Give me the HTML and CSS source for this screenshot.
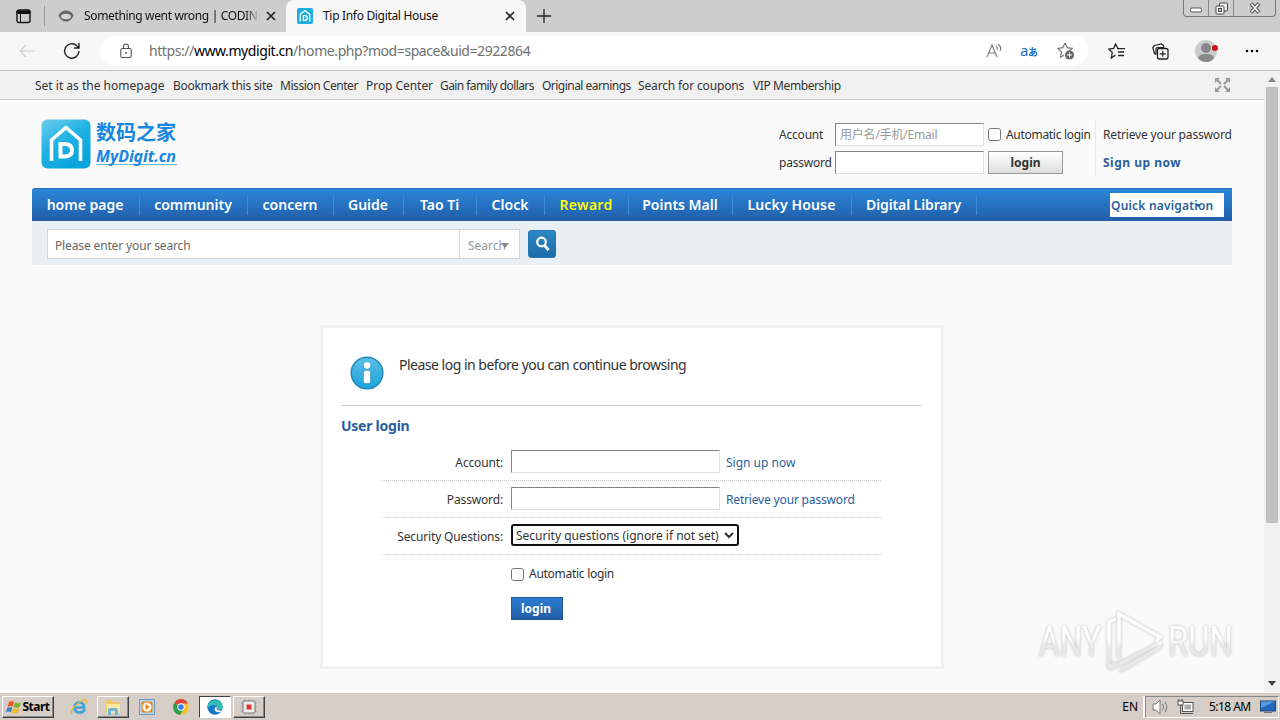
FILE: index.html
```
<!DOCTYPE html>
<html lang="en">
<head>
  <meta charset="UTF-8">
  <title>Tip Info Digital House</title>
  <link rel="stylesheet" href="styles.css">
</head>
<body>
  <div class="tabs">
    <div class="tab-menu">
      <svg width="16" height="15" viewBox="0 0 16 15"><rect x="1" y="1" width="13" height="12.500" rx="2" fill="none" stroke="#111" stroke-width="1.400"/><path d="M1 2h13v2.500H1zM4.500 2v11" fill="#111" stroke="#111"/></svg>
    </div>
    <div class="tab">
      <svg width="16" height="16" viewBox="0 0 16 16"><path d="M.5 7.500Q3 2.500 8 2.500T15.500 7.500Q13 13.500 8 13.500T.5 7.500Z" fill="#666"/><ellipse cx="8" cy="8.500" rx="5" ry="2.700" fill="#d4d4d4"/></svg>
      <span class="tab-title t1">Something went wrong | CODING</span>
      <svg class="x" width="10" height="10" viewBox="0 0 10 10"><path d="M1 1l8 8M9 1l-8 8"/></svg>
    </div>
    <div class="tab active">
      <svg width="16" height="16" viewBox="0 0 50 50"><rect width="50" height="50" rx="6" fill="#1badde"/><path d="M10 42V20L25 8l15 12v22M20 24v15h5q7-1 7-8t-7-7z" fill="none" stroke="#fff" stroke-width="4"/></svg>
      <span class="tab-title t2">Tip Info Digital House</span>
      <svg class="x" width="10" height="10" viewBox="0 0 10 10"><path d="M1 1l8 8M9 1l-8 8"/></svg>
    </div>
    <svg class="plus" width="14" height="14" viewBox="0 0 14 14"><path d="M7 0v14M0 7h14" stroke="#222" stroke-width="1.300"/></svg>
    <div class="win-btns">
      <span class="wb low"><svg width="12" height="6"><rect x=".5" y="1" width="11" height="4" rx="1.500" fill="#fff" stroke="#555"/></svg></span>
      <span class="wb"><svg width="13" height="13"><rect x="4.500" y="1" width="8" height="8" rx="1" fill="#eee" stroke="#444"/><rect x="1" y="4" width="8" height="8" rx="1" fill="#fff" stroke="#444"/><rect x="3.500" y="6.500" width="3" height="3" fill="#ccc" stroke="#444"/></svg></span>
      <span class="wb close"><svg width="12" height="12"><path d="M2 1.500l8 9M10 1.500l-8 9" stroke="#555" stroke-width="4"/><path d="M2.500 2l7 8M9.500 2l-7 8" stroke="#fff" stroke-width="1.800"/></svg></span>
    </div>
  </div>

  <div class="toolbar">
    <svg class="back" width="16" height="14" viewBox="0 0 16 14"><path d="M16 7H1M7 1L1 7l6 6" fill="none" stroke="#ccc" stroke-width="1.200"/></svg>
    <svg class="reload" width="18" height="18" viewBox="0 0 18 18"><path d="M16 9a7.200 7.200 0 1 1-2.500-5.500L16 6M16 1v5h-5" fill="none" stroke="#222" stroke-width="1.400"/></svg>
    <div class="address">
      <svg class="lock" width="12" height="16" viewBox="0 0 12 16"><rect x=".8" y="5.500" width="10.400" height="9" rx="1.500" fill="none" stroke="#555" stroke-width="1.100"/><path d="M3.500 5.500V3.500a2.500 2.500 0 0 1 5 0v2" fill="none" stroke="#555" stroke-width="1.100"/><circle cx="6" cy="10" r="1" fill="#555"/></svg>
      <span class="url">https://<b>www.mydigit.cn</b>/home.php?mod=space&amp;uid=2922864</span>
      <svg class="read" width="16" height="16" viewBox="0 0 16 16"><path d="M1 14L6 2l5 12M2.700 10h6.600M10 3q2 1.500 1 4M12 1q4 3 2 7" fill="none" stroke="#777" stroke-width="1.100"/></svg>
      <span class="translate">a<small>あ</small></span>
      <svg class="addfav" width="18" height="18" viewBox="0 0 18 18"><path d="M8 1l2.200 4.700 5 .7-3.600 3.400M8 1L5.800 5.700l-5 .7 3.700 3.500-1 5.300L7 13.200" fill="none" stroke="#777" stroke-width="1.200"/><circle cx="12.500" cy="13" r="4.500" fill="#666"/><path d="M12.500 10.500v5M10 13h5" stroke="#fff"/></svg>
    </div>
    <svg class="fav" width="17" height="16" viewBox="0 0 17 16"><path d="M10 5.500L7.500 1 5.600 5.500l-5 .5L4.300 9.500 3.300 15 7.500 12M9 5.700h8M10 9h6M10 12.500h6" fill="none" stroke="#222" stroke-width="1.300"/></svg>
    <svg class="coll" width="17" height="17" viewBox="0 0 17 17"><path d="M4 11.500L2.500 10.500.8 4.500 2.500 2.500 9.500 1l2 1.500.5 2M4 11.500V6.500q0-2 2-2h6" fill="none" stroke="#222" stroke-width="1.200"/><rect x="5.500" y="5.500" width="10.500" height="10.500" rx="2" fill="#f7f7f7" stroke="#222" stroke-width="1.300"/><path d="M10.750 7.800v6M7.750 10.800h6" stroke="#222" stroke-width="1.200"/></svg>
    <svg class="avatar" width="24" height="22" viewBox="0 0 24 22"><circle cx="11" cy="11" r="11" fill="#ccc"/><circle cx="11" cy="8" r="5" fill="#888"/><path d="M3 18q1-4 8-4t8 4q-3 4-8 4t-8-4" fill="#888"/><circle cx="20" cy="8" r="3" fill="#d8101c"/></svg>
    <svg class="dots" width="14" height="4"><circle cx="2" cy="2" r="1.300"/><circle cx="7" cy="2" r="1.300"/><circle cx="12" cy="2" r="1.300"/></svg>
  </div>

  <div class="view">
    <div class="page">
      <div class="topbar">
        <a>Set it as the homepage</a><a>Bookmark this site</a><a>Mission Center</a><a>Prop Center</a><a>Gain family dollars</a><a>Original earnings</a><a>Search for coupons</a><a>VIP Membership</a>
        <svg class="expand" width="15" height="14" viewBox="0 0 15 14"><path d="M2 2l4 4M13 2L9 6M2 12l4-4M13 12L9 8" stroke="#999" stroke-width="2"/><path d="M0 0h5L0 5zM15 0h-5l5 5zM0 14h5L0 9zM15 14h-5l5-5z" fill="#999"/></svg>
      </div>

      <div class="wrap">
        <div class="header">
          <svg class="mark" width="50" height="50" viewBox="0 0 50 50">
            <defs><linearGradient id="lg" x1="0" y1="0" x2="0.600" y2="1"><stop offset="0" stop-color="#6ccdee"/><stop offset=".5" stop-color="#22b2e4"/><stop offset="1" stop-color="#08a4dc"/></linearGradient></defs>
            <rect x=".5" y=".5" width="49" height="49" rx="6" fill="url(#lg)"/>
            <path d="M10.500 42V21L25 8.500 39.500 21v21" fill="none" stroke="#fff" stroke-width="3.600" stroke-linejoin="round"/>
            <path d="M19.500 25v12.500h4.500q7-.5 7-6.300T24 25z" fill="none" stroke="#fff" stroke-width="4"/>
          </svg>
          <div class="brand"><div class="cn">数码之家</div><div class="en">MyDigit.cn</div></div>
          <div class="quick-login">
            <label>Account</label>
            <input class="in" type="text" placeholder="用户名/手机/Email">
            <div class="auto"><input type="checkbox"><span>Automatic login</span></div>
            <a class="side">Retrieve your password</a>
            <label>password</label>
            <input class="in" type="text">
            <div><button class="gray">login</button></div>
            <a class="side reg">Sign up now</a>
          </div>
        </div>

        <div class="nav">
          <a>home page</a><a>community</a><a>concern</a><a>Guide</a><a>Tao Ti</a><a>Clock</a><a class="hot">Reward</a><a>Points Mall</a><a>Lucky House</a><a>Digital Library</a>
          <div class="quick"><span>Quick navigation</span><i></i></div>
        </div>

        <div class="search">
          <div class="search-box"><span class="ph">Please enter your search</span><span class="type">Search<i></i></span></div>
          <button class="go"><svg width="16" height="16" viewBox="0 0 16 16"><circle cx="6.500" cy="6" r="4.300" fill="none" stroke="#fff" stroke-width="2.200"/><path d="M9.500 9.500l4 4.500" stroke="#fff" stroke-width="2.800"/></svg></button>
        </div>

        <div class="card">
          <div class="notice">
            <svg width="34" height="34" viewBox="0 0 34 34"><defs><linearGradient id="ig" x1="0" y1="0" x2="0" y2="1"><stop offset="0" stop-color="#5fbde4"/><stop offset="1" stop-color="#18a4dc"/></linearGradient></defs><circle cx="17" cy="17" r="15.800" fill="url(#ig)" stroke="#2488b8" stroke-width="1.500"/><circle cx="17" cy="9.500" r="3.200" fill="#fff"/><rect x="13.500" y="14.500" width="7" height="13" rx="2" fill="#fff" stroke="#2488b8" stroke-width=".5"/></svg>
            <p>Please log in before you can continue browsing</p>
          </div>
          <h3>User login</h3>
          <div class="form">
            <div class="row"><label>Account:</label><input class="in" type="text"><a>Sign up now</a></div>
            <div class="row"><label>Password:</label><input class="in" type="text"><a class="forgot">Retrieve your password</a></div>
            <div class="row"><label>Security Questions:</label><div class="select"><span>Security questions (ignore if not set)</span><svg width="10" height="7" viewBox="0 0 10 7"><path d="M1 1l4 4 4-4" fill="none" stroke="#333" stroke-width="2"/></svg></div></div>
            <div class="row last"><label></label><input type="checkbox"><span>Automatic login</span></div>
            <button class="blue">login</button>
          </div>
        </div>
      </div>
    </div>
    <div class="scroll"><i class="up"></i><div class="thumb"></div><i class="down"></i></div>

    <svg class="watermark" width="204" height="66" viewBox="0 0 204 66">
      <defs><linearGradient id="wg" x1="0" y1="0" x2="0" y2="1"><stop offset=".45" stop-color="#fff"/><stop offset=".6" stop-color="#e8e8e8"/></linearGradient></defs>
      <g class="wm-text">
        <text x="3" y="47" textLength="62" lengthAdjust="spacingAndGlyphs">ANY</text>
        <text x="132" y="47" textLength="65" lengthAdjust="spacingAndGlyphs">RUN</text>
      </g>
      <path d="M80 10L73 13V57L80 54M83 50V5L124 28L120 33M84 62L124 38V34L73 60" fill="none" stroke="url(#wg)" stroke-width="3.500"/>
    </svg>
  </div>

  <div class="taskbar">
    <div class="tb raised start">
      <svg width="16" height="16" viewBox="0 0 16 16"><path d="M3 3q3-2 5 0L6.500 8q-2-2-5 0z" fill="#e8562a"/><path d="M9 3.500q3 1.500 6 0L13.500 8q-3 1.500-6 0z" fill="#79b52c"/><path d="M1.200 9q3-2 5 0L5 13.500q-2-2-5 0z" fill="#3c82cc"/><path d="M7 9.300q3 1.500 6 0l-1.200 4.500q-3 1.500-6 0z" fill="#f5b91e"/></svg>
      <b>Start</b>
    </div>
    <div class="tb ie"><svg width="18" height="18" viewBox="0 0 18 18"><path d="M15 11.500Q12.500 15 9 14.500 4.500 14 4.500 9.500T9 4.500q5 0 5 5H5" fill="none" stroke="#3ba3dd" stroke-width="2.700"/><path d="M2 16Q-1 13 7 6.500T16 2q2 1-1 4" fill="none" stroke="#e9b735" stroke-width="1.300"/></svg></div>
    <div class="tb raised"><svg width="18" height="18" viewBox="0 0 18 18"><path d="M2 4V2h6l1 2h7v11H2z" fill="#edca66"/><path d="M3 6h13v9H3z" fill="#f9e9a5"/><path d="M4 17v-5q0-2 2-2h6q2 0 2 2v5h-3v-4H7v4z" fill="#6ab7dc"/></svg></div>
    <div class="tb"><svg width="16" height="16" viewBox="0 0 16 16"><rect x=".5" y=".5" width="15" height="15" fill="#b8d5ec" stroke="#6b9ac4"/><rect x="2.500" y="2.500" width="11" height="11" rx="2" fill="#ee8417"/><circle cx="8" cy="8" r="4.500" fill="#fff"/><path d="M6.500 5v6l4.500-3z" fill="#ee8417"/></svg></div>
    <div class="tb"><svg width="16" height="16" viewBox="0 0 16 16"><circle cx="8" cy="8" r="7.800" fill="#f6c52d"/><path d="M8 8L1.200 4A7.800 7.800 0 0 1 15 4.500H8z" fill="#dc4437"/><path d="M8 8L1.200 4A7.800 7.800 0 0 0 7 15.800L11 10z" fill="#2d9e50"/><circle cx="8" cy="8" r="3.700" fill="#fff"/><circle cx="8" cy="8" r="2.800" fill="#3d7ee8"/></svg></div>
    <div class="tb pressed"><svg width="16" height="16" viewBox="0 0 16 16"><circle cx="8" cy="8" r="7.700" fill="#1677c5"/><path d="M.5 7A7.700 7.700 0 0 1 15.700 8q0 3-4 3-3 0-2-2 0-3-3-3Q2 6 .5 10z" fill="#35bdb5"/><path d="M9 8q1.500 0 .6 1.500 0 2.500 5 2L13.500 13q-5 1-6-2.500-.3-2 1.500-2.500" fill="#fff"/></svg></div>
    <div class="tb raised"><svg width="16" height="16" viewBox="0 0 16 16"><path d="M4 0v16M8 0v16M12 0v16M0 4h16M0 8h16M0 12h16" stroke="#aaa"/><rect x="2" y="2" width="12" height="12" rx="1" fill="#eee" stroke="#777"/><rect x="5.500" y="5.500" width="5" height="5" fill="#dc3838"/></svg></div>
    <span class="lang">EN</span>
    <div class="tray">
      <svg class="spk" width="17" height="16" viewBox="0 0 17 16"><path d="M1 5h3l4-4v14l-4-4H1z" fill="#fff" stroke="#777"/><path d="M10.500 5q2 3 0 6M13 3q3.500 5 0 10" fill="none" stroke="#888" stroke-width="1.200"/></svg>
      <svg class="net" width="17" height="16" viewBox="0 0 17 16"><rect x="5.500" y="3.500" width="10.500" height="9" fill="#fff" stroke="#555"/><rect x="7.500" y="5.500" width="6.500" height="5" fill="#aaa"/><path d="M7 14.500h9M2 0v2M5 0v2M3.500 6v8.500H7" fill="none" stroke="#555"/><rect x="1" y="2" width="5" height="4" fill="#fff" stroke="#555"/></svg>
      <span class="time">5:18 AM</span>
      <svg class="desk" width="16" height="14" viewBox="0 0 16 14"><rect x=".5" y="1" width="15" height="10" fill="#2467bd" stroke="#29497c"/><path d="M1 1.500h14L1 8z" fill="#559ae2"/><path d="M4 12.500h8" stroke="#777"/></svg>
    </div>
  </div>
</body>
</html>
```
FILE: styles.css
```
* {
  box-sizing: border-box;
}

body {
  margin: 0;
  width: 1280px;
  height: 720px;
  overflow: hidden;
  display: flex;
  flex-direction: column;
  font: 12px/18px "Noto Sans", "Noto Sans CJK SC", sans-serif;
  color: #333;
  background: #fafafa;
}

svg {
  display: block;
  flex: none;
}

/* browser chrome */
.tabs {
  height: 32px;
  flex: none;
  display: flex;
  align-items: center;
  background: #cdcdcd;
  color: #111;
}
.tab-menu {
  width: 45px;
  height: 20px;
  border-right: 1px solid #999;
  padding: 3px 0 0 16px;
}
.tab {
  width: 241px;
  height: 32px;
  display: flex;
  align-items: center;
  padding-left: 13px;
}
.tab.active {
  background: #f7f7f7;
  border-radius: 8px 8px 0 0;
  width: 240px;
  padding-left: 11px;
}
.tab-title {
  margin-left: 10px;
  overflow: hidden;
  white-space: nowrap;
}
.t1 {
  width: 176px;
  letter-spacing: -0.35px;
  -webkit-mask-image: linear-gradient(90deg, #000 92%, transparent);
}
.t2 {
  width: 171px;
  letter-spacing: -0.32px;
}
.x {
  margin-left: 6px;
  stroke: #222;
  stroke-width: 1.6;
}
.t2 + .x {
  margin-left: 11px;
}
.plus {
  margin-left: 11px;
}
.win-btns {
  margin-left: auto;
  margin-right: 4px;
  align-self: flex-start;
  display: flex;
  height: 17px;
  border: 1px solid #777;
  border-top: 0;
  border-radius: 0 0 4px 4px;
}
.wb {
  width: 25px;
  display: flex;
  justify-content: center;
  align-items: center;
  border-right: 1px solid #888;
}
.wb.low {
  padding-top: 4px;
}
.wb.close {
  width: 41px;
  border: 0;
}

.toolbar {
  height: 39px;
  flex: none;
  display: flex;
  align-items: center;
  background: #f7f7f7;
  border-bottom: 1px solid #c3c3c3;
}
.back {
  margin-left: 19px;
}
.reload {
  margin-left: 28px;
}
.address {
  width: 988px;
  height: 30px;
  margin-left: 19px;
  border-radius: 15px;
  background: #fff;
  display: flex;
  align-items: center;
}
.lock {
  margin-left: 20px;
}
.url {
  margin-left: 17px;
  width: 837px;
  font-size: 14px;
  letter-spacing: -0.42px;
  color: #707070;
}
.url b {
  font-weight: 400;
  color: #000;
}
.translate {
  margin-left: 18px;
  width: 18px;
  font-size: 15px;
  letter-spacing: -0.5px;
  white-space: nowrap;
  color: #1a70c4;
}
.translate small {
  font-size: 10px;
  font-weight: bold;
}
.addfav {
  margin-left: 19px;
}
.fav {
  margin-left: 20px;
}
.coll {
  margin-left: 27px;
}
.avatar {
  margin-left: 26px;
}
.dots {
  margin-left: 26px;
}

/* page area */
.view {
  position: relative;
  flex: 1;
  min-height: 0;
  display: flex;
}
.page {
  width: 1264px;
}
.topbar {
  height: 29px;
  display: flex;
  align-items: center;
  padding: 1px 0 0 35px;
  background: #f0f0f0;
  border-bottom: 1px solid #cdcdcd;
  white-space: nowrap;
}
.topbar a { width: 107px; letter-spacing: -0.3px; }
.topbar a:nth-child(1) { width: 138px; letter-spacing: 0; }
.topbar a:nth-child(3) { width: 86px; letter-spacing: -0.45px; }
.topbar a:nth-child(4) { width: 74px; letter-spacing: -0.05px; }
.topbar a:nth-child(5) { width: 102px; letter-spacing: -0.58px; }
.topbar a:nth-child(6) { width: 96px; letter-spacing: -0.53px; }
.topbar a:nth-child(7) { width: 115px; letter-spacing: -0.15px; }
.topbar a:nth-child(8) { letter-spacing: -0.4px; }
.expand {
  margin-left: auto;
  margin-right: 34px;
  margin-bottom: 2px;
}

.wrap {
  width: 1200px;
  margin-left: 32px;
}
.header {
  height: 88px;
  display: flex;
  padding: 19px 0 0 9px;
}
.brand {
  margin-left: 5px;
  width: 81px;
  color: #1787e0;
}
.cn {
  font: bold 20px/26px "Noto Sans CJK SC", sans-serif;
}
.en {
  height: 20px;
  font: italic bold 16px/22px "Noto Sans", sans-serif;
  letter-spacing: -0.1px;
  border-bottom: 1px solid #6eb5ee;
}
.quick-login {
  margin-left: auto;
  margin-top: 1px;
  display: grid;
  grid-template-columns: 56px 153px 108px 136px;
  grid-template-rows: 28px 28px;
  align-items: center;
  height: 56px;
  white-space: nowrap;
}
.quick-login label,
.auto span {
  padding-top: 2px;
  letter-spacing: -0.3px;
}
.quick-login label {
  letter-spacing: -0.2px;
}
.in {
  display: block;
  width: 149px;
  height: 23px;
  margin: 0;
  padding: 0 4px;
  border: 1px solid;
  border-color: #848484 #e0e0e0 #e0e0e0 #848484;
  background: #fff;
  font: 12px "Noto Sans", "Noto Sans CJK SC", sans-serif;
  letter-spacing: -0.2px;
}
.in::placeholder {
  color: #999;
}
.auto {
  display: flex;
  align-items: center;
}
input[type="checkbox"] {
  margin: 1px 5px 0 0;
  width: 13px;
  height: 13px;
}
.side {
  height: 28px;
  padding-left: 7px;
  line-height: 30px;
  letter-spacing: -0.17px;
  border-left: 1px solid #e8e8e8;
  margin-left: -1px;
}
.reg {
  font-weight: bold;
  letter-spacing: 0.5px;
  color: #2a5f9c;
}
.gray {
  display: block;
  width: 75px;
  height: 23px;
  padding: 0;
  border: 1px solid #999;
  background: linear-gradient(#fff, #ddd);
  font: bold 12px "Noto Sans", sans-serif;
  color: #333;
}

.nav {
  height: 33px;
  display: flex;
  align-items: center;
  background: linear-gradient(#2c86d8, #205fac);
  border-top: 1px solid #236db8;
  border-bottom: 1px solid #265d9c;
  border-radius: 3px 0 0 0;
  color: #fff;
  font-size: 14px;
  font-weight: 600;
}
.nav a {
  height: 20px;
  padding-right: 1px;
  line-height: 20px;
  text-align: center;
  white-space: nowrap;
  border-right: 1px solid #3f8bd6;
}
.nav a:nth-child(1) { width: 108px; }
.nav a:nth-child(2) { width: 108px; }
.nav a:nth-child(3) { width: 86px; }
.nav a:nth-child(4) { width: 70px; }
.nav a:nth-child(5) { width: 73px; }
.nav a:nth-child(6) { width: 68px; }
.nav a:nth-child(7) { width: 84px; }
.nav a:nth-child(8) { width: 104px; }
.nav a:nth-child(9) { width: 119px; letter-spacing: 0.15px; }
.nav a:nth-child(10) { width: 125px; letter-spacing: -0.1px; }
.nav .hot {
  color: #ff0;
  letter-spacing: 0.3px;
}
.quick {
  position: relative;
  width: 114px;
  height: 24px;
  margin-left: auto;
  margin-right: 8px;
  padding-left: 1px;
  background: #fff;
  color: #2a5f9c;
  font-size: 12px;
  letter-spacing: 0.2px;
  line-height: 25px;
  white-space: nowrap;
}
.quick i {
  position: absolute;
  left: 85px;
  top: 11px;
  border: 3px solid transparent;
  border-top-color: #2a5f9c;
}

.search {
  height: 44px;
  display: flex;
  padding: 8px 0 0 15px;
  background: #e8eff5;
}
.search-box {
  width: 473px;
  height: 30px;
  display: flex;
  border: 1px solid #ccd9e3;
  background: #fff;
  line-height: 31px;
  color: #666;
}
.ph {
  width: 411px;
  padding-left: 7px;
  letter-spacing: -0.14px;
}
.type {
  position: relative;
  flex: 1;
  padding-left: 8px;
  border-left: 1px solid #ccd9e3;
  color: #999;
}
.type i {
  position: absolute;
  left: 41px;
  top: 13px;
  border: 4px solid transparent;
  border-top: 5px solid #888;
  border-bottom: 0;
}
.go {
  width: 28px;
  height: 28px;
  margin: 1px 0 0 8px;
  padding: 0 0 0 6px;
  border: 1px solid #2476ae;
  border-radius: 3px;
  background: linear-gradient(#2b88c4, #1d6ba9);
}

/* login card */
.card {
  width: 624px;
  height: 344px;
  margin: 60px 0 0 288px;
  padding: 28px 19px 0 18px;
  border: 3px solid #f1f1f1;
  background: #fff;
}
.notice {
  height: 50px;
  display: flex;
  padding-left: 9px;
  border-bottom: 1px solid #ccc;
}
.notice p {
  margin: -1px 0 0 15px;
  font-size: 14px;
  line-height: 20px;
  letter-spacing: -0.5px;
}
.card h3 {
  margin: 10px 0 8px;
  font-size: 14px;
  line-height: 20px;
  letter-spacing: -0.25px;
  color: #2a5f9c;
}
.form {
  width: 499px;
  margin-left: 41px;
}
.row {
  height: 37px;
  display: flex;
  align-items: center;
  padding-top: 1px;
  border-bottom: 1px dotted #ccc;
  white-space: nowrap;
}
.row label {
  width: 121px;
  margin-right: 8px;
  padding-top: 1px;
  text-align: right;
  letter-spacing: -0.15px;
}
.row .in {
  width: 209px;
  margin: -2px 6px 0 0;
}
.row a {
  padding-top: 1px;
  color: #2a5f9c;
}
.row .forgot {
  letter-spacing: -0.17px;
}
.row.last {
  border: 0;
  height: 36px;
  letter-spacing: -0.28px;
}
.select {
  width: 228px;
  height: 22px;
  margin-top: -4px;
  display: flex;
  align-items: center;
  padding: 2px 3px 0;
  border: 2px solid #101010;
  border-radius: 3px;
}
.select svg {
  margin-left: auto;
}
.blue {
  display: block;
  width: 52px;
  height: 23px;
  margin: 6px 0 0 129px;
  padding: 0 2px 0 0;
  border: 1px solid #235994;
  background: linear-gradient(#2a7cd0, #255fa9);
  color: #fff;
  font: bold 12px "Noto Sans", sans-serif;
}

.scroll {
  width: 16px;
  padding: 6px 0 6px;
  display: flex;
  flex-direction: column;
  align-items: center;
  background: #f1f1f1;
}
.scroll i {
  border: 4px solid transparent;
}
.scroll .up {
  border-top: 0;
  border-bottom: 5px solid #888;
}
.scroll .down {
  margin-top: auto;
  border-bottom: 0;
  border-top: 5px solid #444;
}
.thumb {
  width: 12px;
  height: 436px;
  margin-top: 5px;
  background: #c1c1c1;
}

.watermark {
  position: absolute;
  left: 1036px;
  top: 538px;
  filter: drop-shadow(0 0 1.5px #bbb);
}
.wm-text {
  font: 400 43px Roboto, sans-serif;
  fill: url(#wg);
}

/* taskbar */
.taskbar {
  height: 28px;
  flex: none;
  display: flex;
  align-items: center;
  gap: 2px;
  padding: 1px 1px 0 2px;
  background: #d5cdc6;
  border-top: 1px solid #fff;
  color: #000;
}
.tb {
  width: 32px;
  height: 22px;
  display: flex;
  align-items: center;
  justify-content: center;
}
.raised {
  border: 1px solid;
  border-color: #fff #404040 #404040 #fff;
  box-shadow: inset -1px -1px #888;
}
.pressed {
  border: 1px solid;
  border-color: #404040 #fff #fff #404040;
  background: #fff;
}
.start {
  width: 52px;
  letter-spacing: -0.5px;
}
.ie {
  margin-left: 7px;
}
.lang {
  margin-left: auto;
}
.tray {
  width: 134px;
  height: 22px;
  margin-left: 5px;
  display: flex;
  align-items: center;
  border: 1px solid;
  border-color: #888 #fff #fff #888;
  box-shadow: -2px 0 #fff;
}
.spk {
  margin-left: 6px;
}
.net {
  margin-left: 8px;
}
.time {
  width: 43px;
  margin-left: 15px;
  letter-spacing: -0.55px;
  white-space: nowrap;
}
.desk {
  margin-left: 8px;
}
```
